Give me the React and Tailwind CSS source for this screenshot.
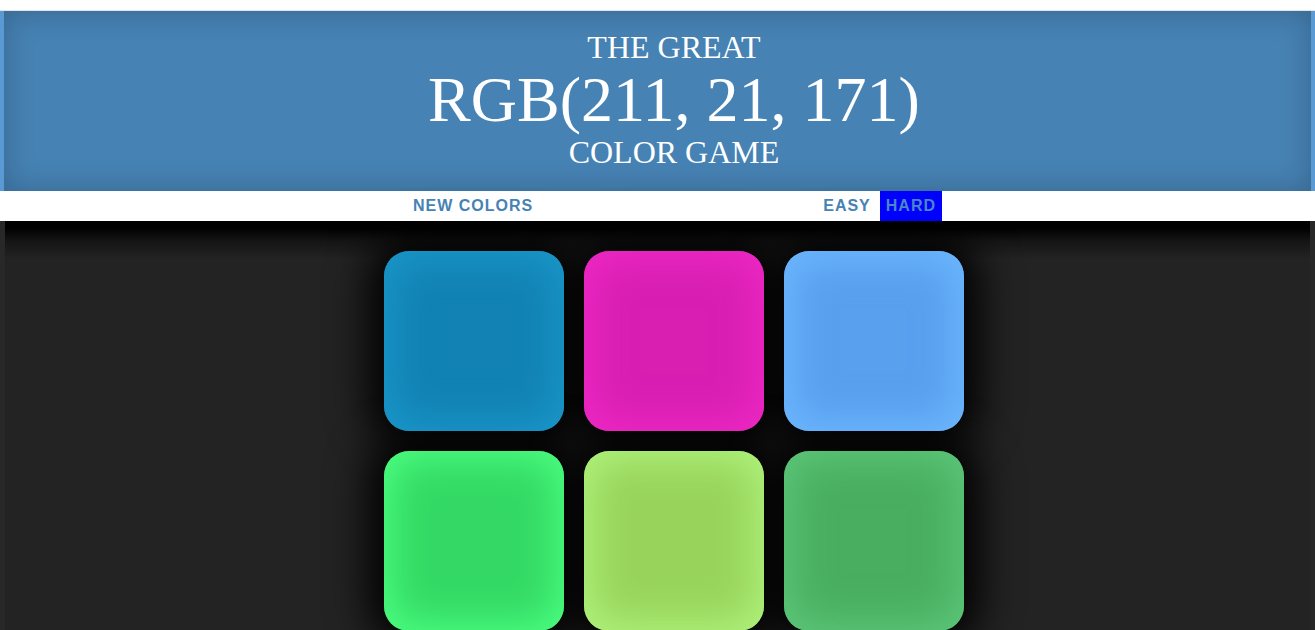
import React from "react";

const squares = [
  "bg-[#1282b4] shadow-[inset_0_0_40px_8px_#1a97c9]",
  "bg-[#d81fb2] shadow-[inset_0_0_40px_8px_#ef28c5]",
  "bg-[#59a0ef] shadow-[inset_0_0_40px_8px_#6db8ff]",
  "bg-[#33d964] shadow-[inset_0_0_40px_8px_#4cff80]",
  "bg-[#98d45c] shadow-[inset_0_0_40px_8px_#b0f47c]",
  "bg-[#49ae60] shadow-[inset_0_0_40px_8px_#5dc779]",
];

export default function App() {
  return (
    <div className="min-h-screen flex flex-col bg-white overflow-hidden">
      <div className="h-[11px] bg-white border-b border-[#e3e3e3]" />
      <header className="h-[180px] bg-[#4682b4] border-x-[4px] border-[#5a9ad4] shadow-[inset_0_0_30px_rgba(0,0,0,0.22)] pl-[33px] pt-[19px] text-white text-center font-['Liberation_Serif',serif] font-normal">
        <div className="text-[32px] leading-[35px]">THE GREAT</div>
        <div className="text-[64px] leading-[70px]">RGB(211, 21, 171)</div>
        <div className="text-[32px] leading-[35px]">COLOR GAME</div>
      </header>
      <nav className="relative z-10 h-[30px] bg-white pl-[33px] flex justify-center">
        <div className="w-[536px] flex items-stretch justify-between font-['Liberation_Sans',Arial,sans-serif] font-bold text-[16px] tracking-[1px] text-[#4682b4]">
          <button className="ml-[1px] px-[6px] h-[30px] uppercase">New Colors</button>
          <div className="flex gap-[4px]">
            <button className="pl-[6px] pr-[5px] h-[30px]">EASY</button>
            <button className="px-[6px] h-[30px] bg-[#0000ff] text-[#4a86c8]">HARD</button>
          </div>
        </div>
      </nav>
      <main className="relative z-0 isolate flex-1 bg-[#232323] bg-[linear-gradient(to_bottom,#000_0px,#000_7px,#151515_20px,#232323_38px)] border-x-[5px] border-[#282828] pl-[33px] flex justify-center">
        <div className="mt-[30px] grid grid-cols-[repeat(3,180px)] gap-5 h-fit">
          {squares.map((c, i) => (
            <div
              key={i}
              className={`relative w-[180px] h-[180px] rounded-[25px] before:content-[''] before:absolute before:inset-0 before:rounded-[25px] before:-z-10 before:shadow-[0_0_40px_15px_#000] ${c}`}
            />
          ))}
        </div>
      </main>
    </div>
  );
}
